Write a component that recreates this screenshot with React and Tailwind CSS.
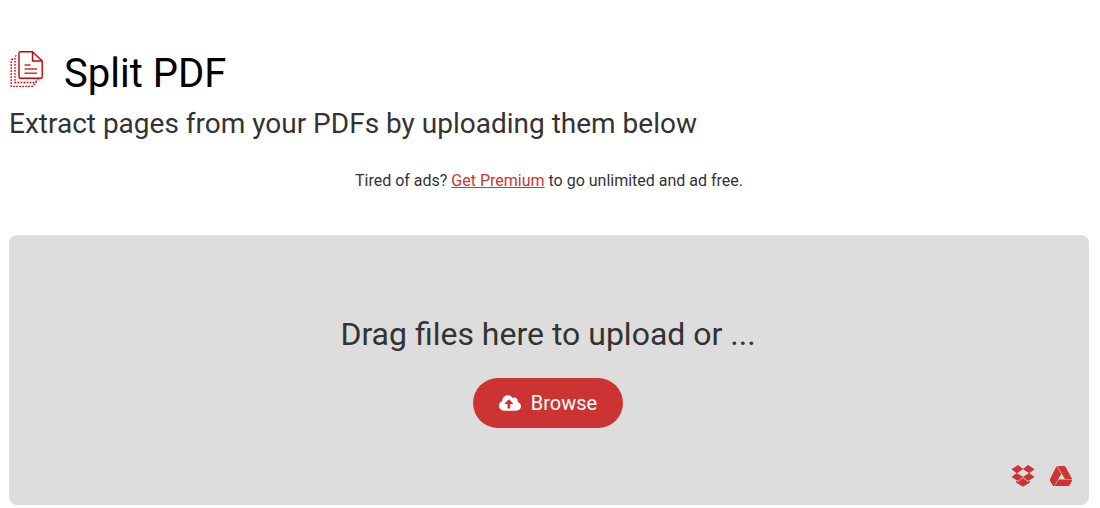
import React, { useRef } from "react";
import { FaCloudUploadAlt } from "react-icons/fa";

function SplitIcon() {
  return (
    <svg viewBox="-1 0 34 38" className="w-[34px] h-[38px] shrink-0" fill="none" stroke="#cc0000" aria-hidden="true">
      <path d="M10.500 1.700H22.500L32.200 11V26.700Q32.200 28.200 30.700 28.200H10.500Q9 28.200 9 26.700V3.200Q9 1.700 10.500 1.700Z" strokeWidth="1.400" />
      <path d="M22.500 2V11H32" strokeWidth="1.400" />
      <path d="M14.500 15H20.500M14.500 19H27M14.500 23.200H27" strokeWidth="1.600" stroke="#cc3333" />
      <path d="M6.500 5.500Q5 6 5 8V32.500H24.500L28.500 29.500" strokeWidth="1.300" strokeDasharray="1.700 1.300" />
      <path d="M3 9Q1.200 9.500 1.200 11V36.300H22.500L26.500 32" strokeWidth="1.300" strokeDasharray="1.700 1.300" />
    </svg>
  );
}

function DropboxIcon() {
  return (
    <svg viewBox="0 0 24 24" className="w-6 h-6" fill="currentColor" aria-hidden="true">
      <path d="M7 1L12.200 5L5.800 9.200L0.400 5.200Z" />
      <path d="M17 1L23.600 5.200L18.200 9.200L11.800 5Z" />
      <path d="M5.800 8.900L12.200 13L7 17L0.400 13Z" />
      <path d="M18.200 8.900L23.600 13L17 17L11.800 13Z" />
      <path d="M12 13.900L17 17.800L19 16.700V18.600L12 22.800L5 18.600V16.700L7 17.800Z" />
    </svg>
  );
}

function DriveIcon() {
  return (
    <svg viewBox="0 0 24 24" className="w-6 h-6" fill="currentColor" aria-hidden="true">
      <path d="M7.800 2.300L12.200 10L5 22.200Q3.900 21.900 3.500 21L1 16.700Q0.600 15.800 1 15L7 3.300Q7.300 2.600 7.800 2.300Z" />
      <path d="M8.300 2H15Q15.900 2 16.400 2.800L23.200 15H15.900Z" />
      <path d="M9.600 15.400H23.200Q23.400 16.100 23 16.800L20.600 21.200Q20.100 22.100 19.200 22.100H5.600Z" />
    </svg>
  );
}

export default function App() {
  const fileInput = useRef(null);

  return (
    <div className="min-h-screen bg-white pl-[9px] pr-[11px] pt-[50px] pb-[3px] text-[#333333]" style={{ fontFamily: "Roboto, sans-serif" }}>
      <header>
        <h1 className="flex items-start gap-[21px] text-[40px] leading-[48px] text-black">
          <SplitIcon />
          Split PDF
        </h1>
        <h2 className="mt-1.5 text-[28px] leading-10">Extract pages from your PDFs by uploading them below</h2>
      </header>

      <p className="mt-6 text-center text-base leading-[26px]">
        Tired of ads?{" "}
        <a href="#premium" className="text-[#cc3333] underline">Get Premium</a>
        {" "}to go unlimited and ad free.
      </p>

      <main className="mt-[41px] rounded-lg bg-[#dddddd] pt-20 pb-[17px] pl-[14px] pr-4">
        <h3 className="text-center text-[32px] leading-[38px]">Drag files here to upload or ...</h3>
        <div className="mt-[25px] flex justify-center">
          <input ref={fileInput} type="file" accept="application/pdf" multiple aria-label="PDF files" className="hidden" />
          <button
            type="button"
            onClick={() => fileInput.current.click()}
            className="flex h-[50px] items-center gap-[10px] rounded-full bg-[#cc3333] px-[26px] text-xl text-white"
          >
            <FaCloudUploadAlt className="w-[22px] h-[18px]" />
            Browse
          </button>
        </div>
        <div className="mt-9 flex justify-end gap-[14px] text-[#cc3333]">
          <button type="button" aria-label="Dropbox">
            <DropboxIcon />
          </button>
          <button type="button" aria-label="Google Drive">
            <DriveIcon />
          </button>
        </div>
      </main>
    </div>
  );
}
